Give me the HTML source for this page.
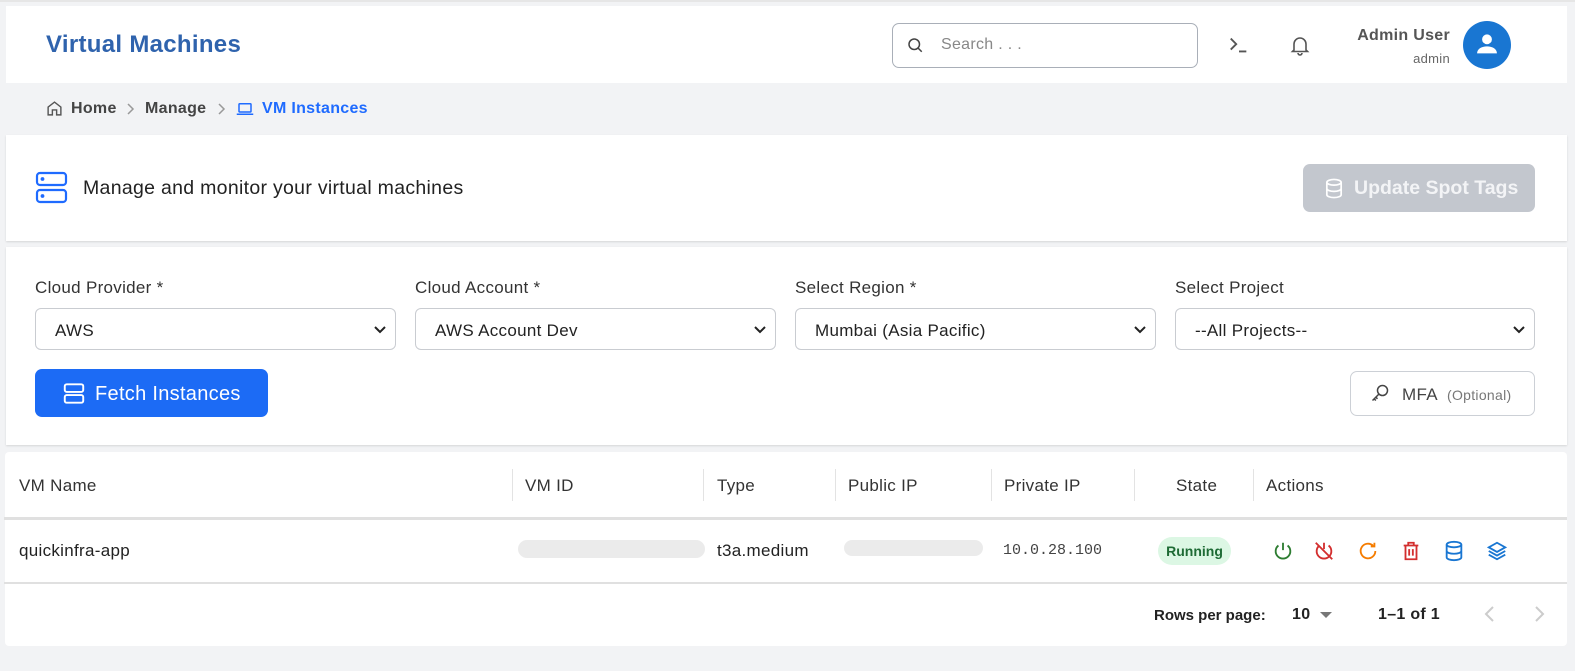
<!DOCTYPE html>
<html><head><meta charset="utf-8">
<style>
*{box-sizing:border-box;margin:0;padding:0}
body{width:1575px;height:671px;background:#f2f3f5;font-family:"Liberation Sans",sans-serif;position:relative;overflow:hidden;color:#222;letter-spacing:.3px}
.a{position:absolute}
.panel{position:absolute;background:#fff;left:6px;width:1561px}
.sel{position:absolute;top:308px;height:42px;width:361px;border:1px solid #c9ccd1;border-radius:6px;font-size:17px;padding:12px 0 0 19px;color:#222}
.sel svg{position:absolute;right:8px;top:14px}
.lbl{position:absolute;top:278px;font-size:17px;color:#333}
.th{position:absolute;top:476px;font-size:17px;color:#333}
.sep{position:absolute;top:469px;width:1px;height:32px;background:#e3e3e3}
.td{position:absolute;top:541px;font-size:17px;color:#222}
.ic{position:absolute;top:540px}
</style></head><body>
<div class="a" style="left:0;top:0;width:1575px;height:2px;background:#e6e6e6"></div>
<div class="panel" style="top:6px;height:77px"></div>
<div class="a" style="left:46px;top:31px;font-size:24px;font-weight:bold;color:#2f63ad">Virtual Machines</div>
<div class="a" style="left:892px;top:23px;width:306px;height:45px;border:1px solid #a9afb8;border-radius:7px"></div>
<svg class="a" style="left:906px;top:36px" width="18" height="18" viewBox="0 0 24 24" fill="none" stroke="#444" stroke-width="2"><circle cx="11" cy="11" r="7"/><path d="M16 16l5 5"/></svg>
<div class="a" style="left:941px;top:36px;font-size:16px;color:#888">Search . . .</div>
<svg class="a" style="left:1228px;top:34px" width="22" height="22" viewBox="0 0 24 24" fill="none" stroke="#555" stroke-width="2"><path d="M3 5l6 6-6 6M12 19h8"/></svg>
<svg class="a" style="left:1288px;top:32px" width="24" height="26" viewBox="0 0 24 24" fill="none" stroke="#555" stroke-width="1.6"><path d="M6 17V11a6 6 0 0112 0v6l1.5 1.5h-15zM10 20a2 2 0 004 0"/></svg>
<div class="a" style="left:1310px;top:27px;width:140px;text-align:right;font-size:16px;font-weight:bold;color:#555">Admin User</div>
<div class="a" style="left:1320px;top:51px;width:130px;text-align:right;font-size:13px;color:#666">admin</div>
<div class="a" style="left:1463px;top:21px;width:48px;height:48px;border-radius:50%;background:#1976d2"></div>
<svg class="a" style="left:1473px;top:30px" width="28" height="28" viewBox="0 0 24 24" fill="#fff"><circle cx="12" cy="8" r="4.2"/><path d="M3.5 20c0-4 4-6 8.5-6s8.5 2 8.5 6z"/></svg>
<svg class="a" style="left:46px;top:100px" width="17" height="17" viewBox="0 0 24 24" fill="none" stroke="#555" stroke-width="2"><path d="M3 10l9-7 9 7v11h-6v-7H9v7H3z"/></svg>
<div class="a" style="left:71px;top:100px;font-size:16px;font-weight:bold;color:#444">Home</div>
<svg class="a" style="left:125px;top:102px" width="10" height="14" viewBox="0 0 10 14" fill="none" stroke="#999" stroke-width="1.5"><path d="M3 2l5 5-5 5"/></svg>
<div class="a" style="left:145px;top:100px;font-size:16px;font-weight:bold;color:#444">Manage</div>
<svg class="a" style="left:216px;top:102px" width="10" height="14" viewBox="0 0 10 14" fill="none" stroke="#999" stroke-width="1.5"><path d="M3 2l5 5-5 5"/></svg>
<svg class="a" style="left:236px;top:101px" width="18" height="16" viewBox="0 0 24 20" fill="none" stroke="#1f6bff" stroke-width="2"><rect x="4" y="3" width="16" height="11" rx="1"/><path d="M1 17h22"/></svg>
<div class="a" style="left:262px;top:100px;font-size:16px;font-weight:bold;color:#1f6bff">VM Instances</div>
<div class="panel" style="top:135px;height:106px;box-shadow:0 1px 2px rgba(0,0,0,.12)"></div>
<svg class="a" style="left:35px;top:171px" width="33" height="33" viewBox="0 0 33 33" fill="none" stroke="#1f6bff" stroke-width="2.2"><rect x="2" y="2" width="29" height="12" rx="3"/><rect x="2" y="19" width="29" height="12" rx="3"/><circle cx="7.5" cy="8" r=".8" fill="#1f6bff"/><circle cx="7.5" cy="25" r=".8" fill="#1f6bff"/></svg>
<div class="a" style="left:83px;top:177px;font-size:19.5px;color:#222">Manage and monitor your virtual machines</div>
<div class="a" style="left:1303px;top:164px;width:232px;height:48px;border-radius:7px;background:#c3c7ce"></div>
<svg class="a" style="left:1324px;top:178px" width="20" height="21" viewBox="0 0 20 22" fill="none" stroke="#fff" stroke-width="1.8"><ellipse cx="10" cy="4.5" rx="7.5" ry="3"/><path d="M2.5 4.5v13c0 1.7 3.4 3 7.5 3s7.5-1.3 7.5-3v-13M2.5 11c0 1.7 3.4 3 7.5 3s7.5-1.3 7.5-3"/></svg>
<div class="a" style="left:1354px;top:177px;font-size:19.5px;font-weight:bold;color:#f3f4f6;letter-spacing:0">Update Spot Tags</div>
<div class="panel" style="top:247px;height:198px;box-shadow:0 1px 2px rgba(0,0,0,.12)"></div>
<div class="lbl" style="left:35px">Cloud Provider *</div>
<div class="lbl" style="left:415px">Cloud Account *</div>
<div class="lbl" style="left:795px">Select Region *</div>
<div class="lbl" style="left:1175px">Select Project</div>
<div class="sel" style="left:35px">AWS<svg width="14" height="14" viewBox="0 0 14 14" fill="none" stroke="#222" stroke-width="2"><path d="M2 4l5 5 5-5"/></svg></div>
<div class="sel" style="left:415px">AWS Account Dev<svg width="14" height="14" viewBox="0 0 14 14" fill="none" stroke="#222" stroke-width="2"><path d="M2 4l5 5 5-5"/></svg></div>
<div class="sel" style="left:795px">Mumbai (Asia Pacific)<svg width="14" height="14" viewBox="0 0 14 14" fill="none" stroke="#222" stroke-width="2"><path d="M2 4l5 5 5-5"/></svg></div>
<div class="sel" style="left:1175px;width:360px">--All Projects--<svg width="14" height="14" viewBox="0 0 14 14" fill="none" stroke="#222" stroke-width="2"><path d="M2 4l5 5 5-5"/></svg></div>
<div class="a" style="left:35px;top:369px;width:233px;height:48px;border-radius:7px;background:#1c6bf5"></div>
<svg class="a" style="left:63px;top:383px" width="22" height="21" viewBox="0 0 33 33" fill="none" stroke="#fff" stroke-width="3"><rect x="2" y="2" width="29" height="12" rx="3"/><rect x="2" y="19" width="29" height="12" rx="3"/></svg>
<div class="a" style="left:95px;top:383px;font-size:20px;color:#fff">Fetch Instances</div>
<div class="a" style="left:1350px;top:371px;width:185px;height:45px;border:1.5px solid #ccd0d6;border-radius:7px"></div>
<svg class="a" style="left:1370px;top:383px" width="20" height="20" viewBox="0 0 24 24" fill="none" stroke="#444" stroke-width="1.8"><circle cx="15" cy="9" r="6"/><path d="M10.5 13.5L3 21M5 19l2 2M7 17l2 2"/></svg>
<div class="a" style="left:1402px;top:385px;font-size:17px;color:#444">MFA</div>
<div class="a" style="left:1447px;top:387px;font-size:14px;color:#777">(Optional)</div>
<div class="panel" style="top:452px;height:194px;left:5px;width:1562px;border-radius:4px"></div>
<div class="th" style="left:19px">VM Name</div>
<div class="sep" style="left:512px"></div><div class="th" style="left:525px">VM ID</div>
<div class="sep" style="left:703px"></div><div class="th" style="left:717px">Type</div>
<div class="sep" style="left:835px"></div><div class="th" style="left:848px">Public IP</div>
<div class="sep" style="left:991px"></div><div class="th" style="left:1004px">Private IP</div>
<div class="sep" style="left:1134px"></div><div class="th" style="left:1176px">State</div>
<div class="sep" style="left:1253px"></div><div class="th" style="left:1266px">Actions</div>
<div class="a" style="left:4px;top:517px;width:1563px;height:3px;background:#e0e0e0"></div>
<div class="td" style="left:19px">quickinfra-app</div>
<div class="a" style="left:518px;top:540px;width:187px;height:18px;border-radius:9px;background:#ebebeb"></div>
<div class="td" style="left:717px">t3a.medium</div>
<div class="a" style="left:844px;top:540px;width:139px;height:16px;border-radius:8px;background:#ebebeb"></div>
<div class="td" style="left:1003px;font-family:'Liberation Mono',monospace;font-size:15px;color:#444;top:542px;letter-spacing:0">10.0.28.100</div>
<div class="a" style="left:1158px;top:537px;width:73px;height:28px;border-radius:14px;background:#dcf7e4;color:#1e6b35;font-weight:bold;font-size:14px;text-align:center;line-height:28px;letter-spacing:0">Running</div>
<svg class="ic" style="left:1272px" width="22" height="22" viewBox="0 0 24 24" fill="none" stroke="#2e7d32" stroke-width="2"><path d="M12 3v8M7 6a8 8 0 1010 0"/></svg>
<svg class="ic" style="left:1313px" width="22" height="22" viewBox="0 0 24 24" fill="none" stroke="#d32f2f" stroke-width="2"><path d="M12 3v7M7 6a8 8 0 1010 0M3 3l18 18"/></svg>
<svg class="ic" style="left:1357px" width="22" height="22" viewBox="0 0 24 24" fill="none" stroke="#f57c00" stroke-width="2"><path d="M20 12a8 8 0 11-2.5-5.8M19 3v4h-4"/></svg>
<svg class="ic" style="left:1400px" width="22" height="22" viewBox="0 0 24 24" fill="none" stroke="#d32f2f" stroke-width="2"><path d="M4 6h16M9 6V3h6v3M6 6v15h12V6M10 10v7M14 10v7"/></svg>
<svg class="ic" style="left:1443px" width="22" height="22" viewBox="0 0 24 24" fill="none" stroke="#1976d2" stroke-width="2"><ellipse cx="12" cy="5" rx="8" ry="3"/><path d="M4 5v14c0 1.7 3.6 3 8 3s8-1.3 8-3V5M4 12c0 1.7 3.6 3 8 3s8-1.3 8-3"/></svg>
<svg class="ic" style="left:1486px" width="22" height="22" viewBox="0 0 24 24" fill="none" stroke="#1976d2" stroke-width="2"><path d="M12 3l9 5-9 5-9-5zM3 12l9 5 9-5M3 16l9 5 9-5"/></svg>
<div class="a" style="left:4px;top:582px;width:1563px;height:2px;background:#e0e0e0"></div>
<div class="a" style="left:1154px;top:607px;font-size:15px;font-weight:bold;color:#222;letter-spacing:0">Rows per page:</div>
<div class="a" style="left:1292px;top:606px;font-size:16px;font-weight:bold;color:#222">10</div>
<div class="a" style="left:1320px;top:612px;width:0;height:0;border-left:6px solid transparent;border-right:6px solid transparent;border-top:6px solid #777"></div>
<div class="a" style="left:1378px;top:606px;font-size:16px;font-weight:bold;color:#222">1–1 of 1</div>
<svg class="a" style="left:1482px;top:604px" width="16" height="20" viewBox="0 0 16 20" fill="none" stroke="#ccc" stroke-width="2"><path d="M11 3L4 10l7 7"/></svg>
<svg class="a" style="left:1531px;top:604px" width="16" height="20" viewBox="0 0 16 20" fill="none" stroke="#ccc" stroke-width="2"><path d="M5 3l7 7-7 7"/></svg>
</body></html>
